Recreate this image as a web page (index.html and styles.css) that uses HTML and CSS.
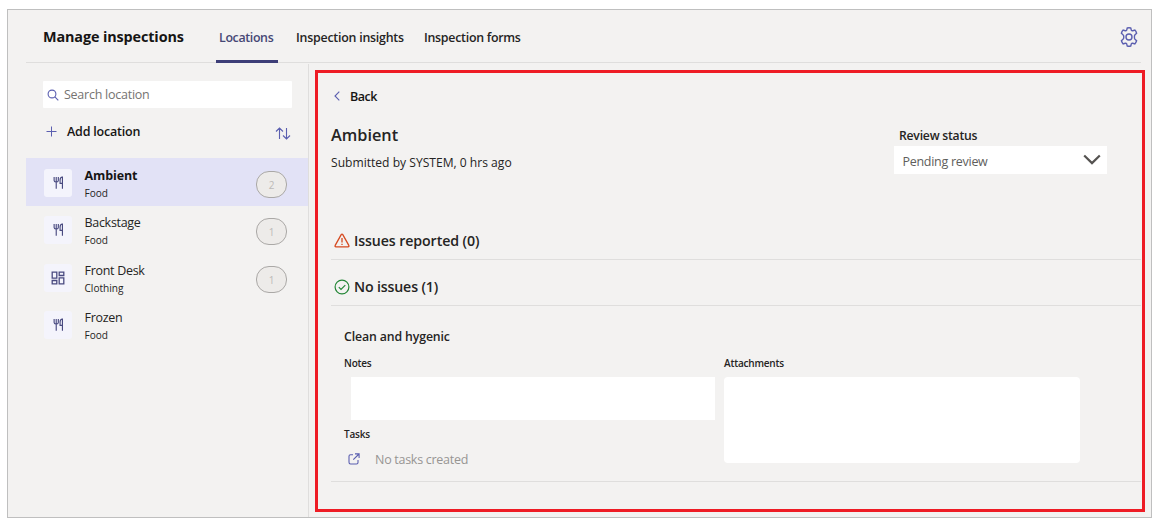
FILE: index.html
```html
<!DOCTYPE html>
<html lang="en">
<head>
<meta charset="utf-8">
<title>Manage inspections</title>
<link rel="stylesheet" href="styles.css">
</head>
<body>
<svg class="sprite" aria-hidden="true">
  <symbol id="food" viewBox="0 0 14 16"><path d="M2 1v4.200q0 1.600 2.400 1.800Q6.800 6.800 6.800 5.200V1M4.400 1v13.500M11.500 14.500V1.200Q8.800 1.500 8.800 4.500v4h2.700"/></symbol>
  <symbol id="grid" viewBox="0 0 14 14"><path d="M1.200 1.200h4.600v6H1.200zM8.200 1.200h4.600v3.300H8.200zM1.200 9.500h4.600v3.300H1.200zM8.200 6.800h4.600v6H8.200z"/></symbol>
</svg>
<div class="frame">
  <header class="header">
    <h1 class="brand"><span>Manage inspections</span></h1>
    <nav class="tabs">
      <a class="tab tab-active">Locations</a>
      <a class="tab tab-insights">Inspection insights</a>
      <a class="tab tab-forms">Inspection forms</a>
    </nav>
    <svg class="gear" viewBox="0 0 20 20"><path d="M7.700 3.100 8.200 1Q10 .6 11.800 1l.5 2.100q.5.8 1.500.6l2-.6q1.300 1.400 1.800 3.100L16 7.700q-.6.600-.6 2.300 0 1.700.6 2.300l1.600 1.500q-.5 1.700-1.800 3.100l-2-.6q-1-.2-1.500.6l-.5 2.100q-1.800.4-3.600 0l-.5-2.100q-.5-.8-1.500-.6l-2 .6Q2.900 15.500 2.400 13.800L4 12.300q.8-.6.8-2.300 0-1.700-.8-2.300L2.400 6.200Q2.900 4.500 4.200 3.100l2 .6q1 .2 1.500-.6z"/><circle cx="10" cy="10" r="3"/></svg>
  </header>
  <div class="body">
    <aside class="sidebar">
      <div class="search">
        <svg class="search-icon" viewBox="0 0 12 12"><circle cx="5" cy="5" r="3.900"/><path d="m7.900 7.900 3.400 3.400"/></svg>
        <span class="search-text">Search location</span>
      </div>
      <div class="actions">
        <svg class="plus" viewBox="0 0 11 11"><path d="M5.500.5v10M.5 5.500h10"/></svg>
        <span class="add-text">Add location</span>
        <svg class="sort" viewBox="0 0 16 13"><path d="M4.500 12V1M1 4.500 4.500 1 8 4.500M11.500 1v11M8 8.500l3.500 3.500L15 8.500"/></svg>
      </div>
      <ul class="list">
        <li class="item item-active"><span class="tile"><svg class="food"><use href="#food"/></svg></span><span class="label"><b class="name name-ambient">Ambient</b><span class="kind">Food</span></span><span class="badge">2</span></li>
        <li class="item"><span class="tile"><svg class="food"><use href="#food"/></svg></span><span class="label"><span class="name">Backstage</span><span class="kind">Food</span></span><span class="badge">1</span></li>
        <li class="item"><span class="tile"><svg class="grid"><use href="#grid"/></svg></span><span class="label"><span class="name">Front Desk</span><span class="kind">Clothing</span></span><span class="badge">1</span></li>
        <li class="item"><span class="tile"><svg class="food"><use href="#food"/></svg></span><span class="label"><span class="name">Frozen</span><span class="kind">Food</span></span></li>
      </ul>
    </aside>
    <main class="panel">
      <div class="back"><svg class="back-icon" viewBox="0 0 6 10"><path d="M5.300.7 1 5l4.300 4.300"/></svg><span>Back</span></div>
      <div class="summary">
        <div>
          <h2 class="title">Ambient</h2>
          <div class="submitted">Submitted by SYSTEM, 0 hrs ago</div>
        </div>
        <div class="review">
          <div class="review-label">Review status</div>
          <div class="select"><span>Pending review</span><svg class="chevron" viewBox="0 0 18 11"><path d="m1.200 1.500 7.800 7.600 7.800-7.600"/></svg></div>
        </div>
      </div>
      <div class="section section-issues"><svg class="warn" viewBox="0 0 16 15"><path d="M7.200 1.700Q8 .4 8.800 1.700l6 10.700q.6 1.300-.8 1.400H2Q.6 13.700 1.200 12.400zM8 5v4.500M8 10.700v1.300"/></svg><span>Issues reported (0)</span></div>
      <div class="section section-ok"><svg class="ok" viewBox="0 0 16 16"><circle cx="8" cy="8" r="6.900"/><path d="m4.800 8.200 2.200 2.200 4.300-4.300"/></svg><span>No issues (1)</span></div>
      <div class="finding">
        <h3 class="finding-title">Clean and hygenic</h3>
        <div class="columns">
          <div class="notes-col">
            <div class="field">Notes</div>
            <div class="notes"></div>
            <div class="field field-tasks">Tasks</div>
            <div class="tasks"><svg class="open" viewBox="0 0 12 12"><path d="M5 1.800H2.500Q1 1.800 1 3.300v6Q1 11 2.500 11h6q1.500 0 1.500-1.500V7M7 .9h4.100V5M11 1 5.300 6.700"/></svg><span>No tasks created</span></div>
          </div>
          <div class="attach-col">
            <div class="field field-attach">Attachments</div>
            <div class="attachments"></div>
          </div>
        </div>
      </div>
    </main>
  </div>
</div>
</body>
</html>
```
FILE: styles.css
```css
* { box-sizing: border-box; }
body { margin: 0; background: #fff; color: #252423; font-family: "Open Sans", "Noto Sans", sans-serif; font-size: 12.5px; overflow: hidden; white-space: nowrap; }
h1, h2, h3, ul { margin: 0; padding: 0; }
svg { fill: none; stroke: #5b5fb0; stroke-width: 1.1; flex: none; }
.sprite { display: none; }
.frame { display: flex; flex-direction: column; width: 1145px; height: 509px; margin: 9px 0 0 7px; border: 1px solid #bfbfbf; background: #f3f2f1; }
.header { display: flex; align-items: center; flex: none; width: 1115px; height: 53px; margin-left: 18px; padding-left: 17px; border-bottom: 1px solid #dfdedd; }
.brand { width: 173px; margin-top: 2px; font-size: 14.4px; line-height: 20px; font-weight: 700; letter-spacing: -0.12px; color: #161514; }
.tabs { display: flex; align-self: stretch; }
.tab { line-height: 55px; font-size: 12.4px; font-weight: 600; letter-spacing: -0.27px; }
.tab-active { width: 62px; margin-right: 18px; padding-left: 3px; letter-spacing: -0.35px; color: #464775; border-bottom: 3px solid #3d3e78; height: 53px; }
.tab-insights { width: 128px; letter-spacing: -0.23px; }
.gear { width: 20px; height: 20px; margin: 2px 2px 0 auto; stroke-width: 1.4; }
.body { display: flex; flex: 1; padding-left: 18px; }
.sidebar { width: 283px; margin-top: 1px; padding-top: 17px; border-right: 1px solid #dfdedd; }
.search { display: flex; align-items: center; width: 249px; height: 27px; margin-left: 17px; padding-left: 4px; background: #fff; border-radius: 1px; }
.search-icon { width: 12px; height: 12px; margin-right: 5px; }
.search-text { color: #757371; letter-spacing: -0.25px; }
.actions { display: flex; align-items: center; height: 20px; margin: 13px 17px 17px 20px; font-weight: 600; letter-spacing: -0.2px; color: #161514; }
.plus { width: 11px; height: 11px; margin-right: 10px; stroke-width: 1; }
.sort { width: 16px; height: 13px; margin: 4px 0 0 auto; }
.list { list-style: none; }
.item { display: flex; height: 47.5px; padding: 10.5px 21px 0 18px; }
.item-active { background: #e2e2f6; }
.tile { display: flex; align-items: center; justify-content: center; width: 28px; height: 28px; margin-right: 12.500px; background: #f4f4fc; border-radius: 3px; }
.tile svg { stroke: #494a80; stroke-width: 1.300; }
.food { width: 13px; height: 14px; }
.grid { width: 14px; height: 14px; }
.label { display: flex; flex-direction: column; margin-top: -2.800px; }
.name { line-height: 19px; letter-spacing: -0.3px; }
.name-ambient { color: #161514; letter-spacing: -0.1px; }
.kind { font-size: 10.1px; line-height: 16px; }
.badge { width: 31px; height: 27px; margin: 2px 0 0 auto; border: 1px solid #aaa8a6; border-radius: 13px; background: #edebe9; color: #bcbab8; font-size: 10px; line-height: 26px; text-align: center; }
.panel { width: 830px; height: 442px; margin: 7px 0 0 6px; padding: 13px 0 0 13px; border: 3px solid #ee1c25; }
.back { display: flex; align-items: center; height: 20px; padding-left: 3px; font-weight: 600; letter-spacing: -0.5px; color: #161514; }
.back-icon { width: 6px; height: 10px; margin-right: 10px; }
.summary { display: flex; height: 69px; margin-top: 16px; }
.title { font-size: 16.3px; line-height: 26px; font-weight: 600; letter-spacing: 0; }
.submitted { margin-top: 2px; line-height: 26px; font-size: 12.1px; }
.review { width: 213px; margin: 2px 35px 0 auto; }
.review-label { height: 22px; padding-left: 5px; line-height: 23px; font-weight: 600; font-size: 12.2px; letter-spacing: -0.22px; }
.select { display: flex; align-items: center; justify-content: space-between; height: 28px; padding: 2px 6px 0 8.500px; background: #fff; color: #605e5c; letter-spacing: -0.28px; }
.chevron { width: 18px; height: 11px; margin-top: -4px; stroke: #555351; stroke-width: 2.200; }
.section { display: flex; align-items: center; margin-right: 1px; padding-left: 3px; border-bottom: 1px solid #dfdedd; font-size: 14.2px; font-weight: 600; letter-spacing: -0.1px; }
.section span { margin-left: 4px; }
.section-issues { height: 38px; margin-top: 31px; }
.section-ok { height: 37px; margin-top: 9px; letter-spacing: -0.16px; }
.section-ok span { margin-top: -1px; }
.warn { width: 16px; height: 15px; stroke: #d64a20; stroke-width: 1.300; }
.ok { width: 16px; height: 16px; stroke: #238636; stroke-width: 1.200; }
.finding { height: 176px; margin-right: 1px; padding: 20px 0 0 13px; border-bottom: 1px solid #dfdedd; }
.finding-title { font-size: 12.3px; line-height: 21px; font-weight: 600; letter-spacing: -0.12px; }
.columns { display: flex; margin-top: 7px; }
.notes-col { width: 380px; }
.field { height: 18px; line-height: 18px; font-size: 10px; font-weight: 600; letter-spacing: -0.2px; }
.notes { width: 364px; height: 43px; margin: 5px 0 0 7px; background: #fff; }
.field-tasks { margin-top: 5px; }
.tasks { display: flex; align-items: center; height: 20px; margin-top: 6px; padding-left: 4px; color: #979593; letter-spacing: -0.28px; }
.open { width: 12px; height: 12px; margin: -1px 15px 0 0; }
.attachments { width: 356px; height: 86px; margin-top: 5px; background: #fff; border-radius: 4px; }
```
